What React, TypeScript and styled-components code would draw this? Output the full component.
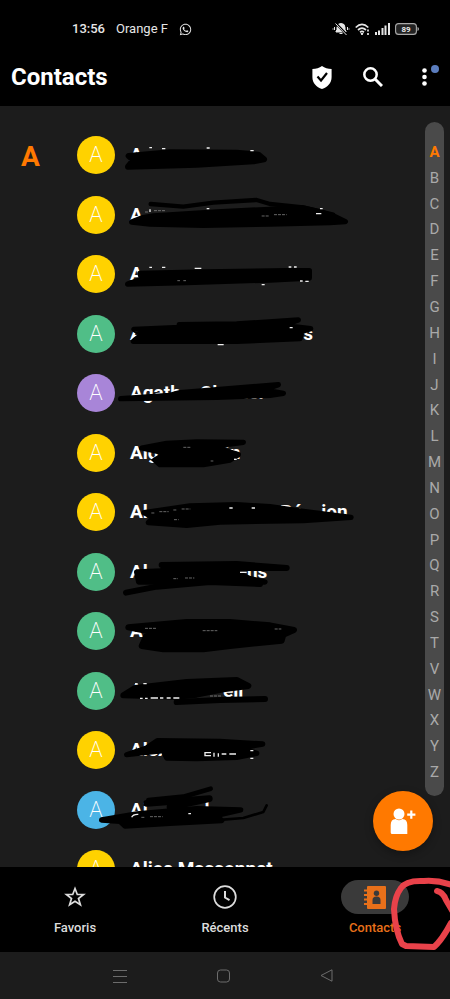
import React from "react";
import styled, { createGlobalStyle } from "styled-components";
import { FaWhatsapp } from "react-icons/fa";

const GlobalStyle = createGlobalStyle`
  * { box-sizing: border-box; }
  body { margin: 0; background: #000; font-family: Roboto, "Liberation Sans", sans-serif; }
  button { font: inherit; color: inherit; background: none; border: 0; padding: 0; cursor: pointer; }
  ul { list-style: none; margin: 0; padding: 0; }
  a { color: inherit; text-decoration: none; }
  svg { display: block; }
`;

const Screen = styled.div`
  position: relative;
  display: flex;
  flex-direction: column;
  height: 100vh;
  overflow: hidden;
  background: #000;
  color: #fff;
`;

const StatusBar = styled.div`
  display: flex;
  align-items: center;
  justify-content: space-between;
  flex: none;
  height: 48px;
  padding: 10px 31px 0 72px;
  color: #e6e6e6;
`;

const StatusGroup = styled.div<{ $gap: number }>`
  display: flex;
  align-items: center;
  gap: ${(p) => p.$gap}px;
`;

const Clock = styled.span`
  font-size: 13px;
  line-height: 16px;
  font-weight: 500;
`;

const Carrier = styled.span`
  font-size: 13px;
  line-height: 16px;
`;

const Header = styled.header`
  display: flex;
  align-items: center;
  justify-content: space-between;
  flex: none;
  height: 58px;
  padding: 0 12px 0 11px;
`;

const Title = styled.h1`
  margin: 0;
  font-size: 24px;
  line-height: 32px;
  font-weight: 700;
`;

const Actions = styled.div`
  display: flex;
  align-items: center;
  gap: 23px;
`;

const IconButton = styled.button`
  position: relative;
  display: flex;
  align-items: center;
  justify-content: center;
  width: 28px;
  height: 28px;
`;

const Dot = styled.span`
  position: absolute;
  top: 2px;
  right: -1px;
  width: 8px;
  height: 8px;
  border-radius: 50%;
  background: #5b7dbe;
`;

const Content = styled.main`
  position: relative;
  display: flex;
  flex: 1;
  min-height: 0;
  overflow: hidden;
  background: #1c1c1c;
`;

const Section = styled.h2`
  flex: none;
  width: 77px;
  margin: 0;
  padding: 34px 0 0 21px;
  font-size: 28px;
  line-height: 34px;
  font-weight: 700;
  color: #ff7900;
`;

const ContactList = styled.ul`
  flex: 1;
  min-width: 0;
  padding-top: 19px;
`;

const ContactRow = styled.li`
  height: 60px;
  &:nth-child(even) { height: 59px; }
`;

const ContactLink = styled.a`
  display: flex;
  align-items: center;
  gap: 15px;
  height: 100%;
`;

const Avatar = styled.span<{ $color: string }>`
  display: flex;
  align-items: center;
  justify-content: center;
  flex: none;
  width: 38px;
  height: 38px;
  border-radius: 50%;
  background: ${(p) => p.$color};
  font-size: 22px;
  line-height: 24px;
  font-weight: 200;
`;

const Name = styled.span`
  white-space: pre;
  font-size: 19px;
  line-height: 24px;
  font-weight: 700;
`;

const Scribbles = styled.svg`
  position: absolute;
  top: 0;
  left: 0;
  pointer-events: none;
`;

const IndexBar = styled.nav`
  display: flex;
  flex-direction: column;
  flex: none;
  width: 19px;
  margin: 16px 6px 71px 0;
  padding: 17px 0 11px;
  border-radius: 10px;
  background: #4a4a4a;
`;

const IndexLetter = styled.a<{ $active: boolean }>`
  display: flex;
  align-items: center;
  justify-content: center;
  flex: 1;
  font-size: 15px;
  line-height: 18px;
  font-weight: ${(p) => (p.$active ? 700 : 400)};
  && { color: ${(p) => (p.$active ? "#ff7900" : "#a9a9a9")}; }
`;

const AddButton = styled.button`
  && {
    position: absolute;
    right: 17px;
    bottom: 16px;
    display: flex;
    align-items: center;
    justify-content: center;
    width: 60px;
    height: 60px;
    border-radius: 50%;
    background: #ff7900;
    box-shadow: 0 3px 8px rgba(0, 0, 0, 0.3);
  }
`;

const TabBar = styled.nav`
  display: flex;
  flex: none;
  height: 85px;
  padding-top: 13px;
`;

const Tab = styled.button<{ $active?: boolean }>`
  && { color: ${(p) => (p.$active ? "#e8701a" : "#dcdcdc")}; }
  display: flex;
  flex: 1;
  flex-direction: column;
  align-items: center;
  gap: 5px;
  font-size: 13px;
  line-height: 18px;
  font-weight: 500;
`;

const Pill = styled.span<{ $active?: boolean }>`
  display: flex;
  align-items: center;
  justify-content: center;
  width: 68px;
  height: 34px;
  border-radius: 17px;
  background: ${(p) => (p.$active ? "#3a3a3a" : "transparent")};
`;

const SystemBar = styled.div`
  display: flex;
  align-items: center;
  justify-content: center;
  gap: 82px;
  flex: none;
  height: 47px;
  padding-right: 4px;
  background: #1c1c1c;
  color: #6c6c6c;
`;

const SystemButton = styled.button`
  display: flex;
  align-items: center;
  justify-content: center;
  width: 21px;
  height: 24px;
`;

const RedMark = styled.svg`
  position: absolute;
  right: 0;
  bottom: 44px;
  pointer-events: none;
`;

const yellow = "#ffd200";
const green = "#50be87";
const purple = "#a885d8";
const blue = "#4bb4e6";

const sp = (n: number) => " ".repeat(n);

const contacts = [
  { name: "A", color: yellow },
  { name: "A", color: yellow },
  { name: "A", color: yellow },
  { name: "A" + sp(34) + "s", color: green },
  { name: "Agath" + sp(4) + "Clauuci", color: purple },
  { name: "Aig" + sp(14) + "in", color: yellow },
  { name: "Al" + sp(28) + "Pé" + sp(4) + "ion", color: yellow },
  { name: "Al" + sp(21) + "ns", color: green },
  { name: "A", color: green },
  { name: "A" + sp(17) + "ell", color: green },
  { name: "Alex" + sp(7) + "eien", color: yellow },
  { name: "Ai" + sp(12) + "l", color: blue },
  { name: "Alice Massonnet", color: yellow },
];

type Ink = { y: number; shapes: [string, number][]; lines?: [string, number][]; flecks: string; faint?: string };

const inks: Ink[] = [
  {
    y: 120,
    shapes: [
      ["M176 108L300 97L500 98L565 104L582 118L550 124L380 134L174 140L190 120Z", 18],
      ["M185 306L215 294L250 288L440 276L600 268L700 264L760 278L795 290L826 305L780 308L600 312L400 316L240 312Z", 16],
    ],
    lines: [["M242 252L340 260L430 248L560 240L600 252L700 262L790 284", 13]],
    flecks: "M238 83h8M276 86h10M410 84h9M541 92h10M240 268v8M410 266h8M738 281h16M750 266h8",
    faint: "M225 276h12M252 272h34M575 288h22M612 284h38",
  },
  {
    y: 240,
    shapes: [
      ["M210 100L400 96L650 92L718 92L718 114L600 120L350 128L173 132L215 118Z", 16],
      ["M328 254L500 252L685 240L640 256L690 262L722 266L696 274L690 296L500 304L190 304L215 284L192 268L330 262Z", 16],
    ],
    flecks: "M238 82h8M276 82h10M374 85h20M656 81h8M672 81h8M575 134h9M690 123h8M706 124h10M443 314h18M659 263h9",
    faint: "M322 122h8M340 122h8",
  },
  {
    y: 360,
    shapes: [
      ["M330 98L625 74L580 90L640 100L600 106L440 112L152 116L300 106Z", 16],
      ["M215 264L290 250L380 246L520 247L450 256L460 270L505 284L480 300L400 314L270 314L254 300L290 280Z", 16],
    ],
    flecks: "M492 298h8",
    faint: "M340 262h22M422 303h8",
  },
  {
    y: 480,
    shapes: [
      ["M222 98L360 78L500 74L600 80L700 94L843 112L700 122L450 126L350 136L235 128L250 112Z", 16],
      ["M200 276L350 270L500 278L540 296L585 306L420 306L206 306Z", 16],
    ],
    lines: [["M275 255L500 252L650 264L480 264L280 268", 18], ["M168 338L260 320L420 306L570 312", 18]],
    flecks: "M478 84h10M545 84h10M510 277h20",
    faint: "M244 99h10M268 95h28M310 90h12M335 87h26M312 119h14M310 296h14M345 294h28",
  },
  {
    y: 600,
    shapes: [
      ["M175 82L350 66L480 66L600 76L672 90L640 104L635 122L480 138L400 148L280 148L215 138L235 94Z", 18],
      ["M160 286L195 264L350 246L500 240L535 258L460 268L380 284L320 290Z", 18],
    ],
    lines: [["M320 306L450 300L585 297", 18]],
    flecks: "M195 251h8M220 251h10M210 295h8M225 295h8M242 294h22M270 294h10M290 294h12M310 294h18",
    faint: "M225 85h36M398 92h44M614 87h20M420 288h35",
  },
  {
    y: 720,
    shapes: [
      ["M262 62L450 64L578 72L510 84L560 100L500 112L380 116L290 114L280 92L170 104L230 84Z", 16],
      ["M95 300L200 282L380 266L512 270L440 286L455 302L300 310L165 318L150 304Z", 16],
    ],
    lines: [
      ["M235 240L340 230L422 206", 14],
      ["M230 250L418 236L300 262", 20],
      ["M460 299L520 294L580 276L590 256", 8],
    ],
    flecks: "M403 98h20M403 107h20M405 98v9M432 98v12M445 100v10M455 102h14M478 102h20M541 92h9M541 115h9M185 292q4-10 20-9M355 281h8",
    faint: "M214 292h12M240 290h38",
  },
];

const IndexLetters = "ABCDEFGHIJKLMNOPQRSTVWXYZ".split("");

const StatusIcons = () => (
  <StatusGroup $gap={5}>
    <svg width="18" height="14" viewBox="0 0 18 14" fill="none" stroke="currentColor">
      <path d="M4 10V9l1-1V5.500a4 4 0 0 1 8 0V8l1 1v1z M7.500 11.500h3" fill="currentColor" />
      <path d="M.5 7h1M2.500 5v3M15.500 5v3M16.500 7h1" strokeWidth="1" />
      <path d="M4 1.500L15 13" stroke="#000" strokeWidth="2.500" />
      <path d="M3.500 1.500L14.500 13" strokeWidth="1" />
    </svg>
    <svg width="15" height="13" viewBox="0 0 15 13" fill="none" stroke="currentColor" strokeWidth="1.700">
      <path d="M.7 4.500Q7 -1.600 13.300 4.500M3 7q4-3.600 8 0M5 9.200q2-1.500 4 0" />
      <path d="M6 10.500h2L7 12z" fill="currentColor" strokeWidth="1" />
      <path d="M13 6.500v2M13 10v2" />
    </svg>
    <svg width="15" height="12" viewBox="0 0 15 12" fill="currentColor">
      <path d="M0 9h2v3H0zM3 7.500h2V12H3zM6.500 5h2v7h-2zM9.500 2.500h2V12h-2zM13 0h2v12h-2z" />
    </svg>
    <svg width="24" height="12" viewBox="0 0 24 12">
      <rect x=".6" y=".6" width="20.800" height="10.800" rx="3" fill="#222" stroke="#aaa" strokeWidth="1.100" />
      <path d="M22.500 4v4q1.500-.4 1.500-2t-1.500-2z" fill="#aaa" />
      <text x="11" y="9" fontSize="8" fontWeight="700" textAnchor="middle" fill="#e6e6e6">89</text>
    </svg>
  </StatusGroup>
);

export default function App() {
  return (
    <Screen>
      <GlobalStyle />
      <StatusBar>
        <StatusGroup $gap={11}>
          <Clock>13:56</Clock>
          <Carrier>Orange F</Carrier>
          <FaWhatsapp size={13} />
        </StatusGroup>
        <StatusIcons />
      </StatusBar>

      <Header>
        <Title>Contacts</Title>
        <Actions>
          <IconButton aria-label="Protection">
            <svg width="20" height="23" viewBox="0 0 20 23">
              <path d="M10 0Q6 3 .4 3V11c0 6 4 10 9.600 12 5.600-2 9.600-6 9.600-12V3Q14 3 10 0z" fill="#fff" />
              <path d="M5.500 10.500l3.500 4L15 7" fill="none" stroke="#000" strokeWidth="2.200" />
            </svg>
          </IconButton>
          <IconButton aria-label="Rechercher">
            <svg width="20" height="20" viewBox="0 0 20 20" fill="none" stroke="#fff">
              <circle cx="7.500" cy="7.500" r="6.200" strokeWidth="2.500" />
              <path d="M12 12l7 7" strokeWidth="3" />
            </svg>
          </IconButton>
          <IconButton aria-label="Plus d’options">
            <svg width="5" height="18" viewBox="0 0 5 18" fill="#fff">
              <circle cx="2.500" cy="2.500" r="2.300" />
              <circle cx="2.500" cy="9" r="2.300" />
              <circle cx="2.500" cy="15.500" r="2.300" />
            </svg>
            <Dot />
          </IconButton>
        </Actions>
      </Header>

      <Content>
        <Section>A</Section>
        <ContactList>
          {contacts.map((c, i) => (
            <ContactRow key={i}>
              <ContactLink href="#contact">
                <Avatar $color={c.color}>A</Avatar>
                <Name>{c.name}</Name>
              </ContactLink>
            </ContactRow>
          ))}
        </ContactList>
        <Scribbles width="370" height="761" viewBox="0 106 370 761" aria-hidden="true">
          {inks.map((ink) => (
            <g
              key={ink.y}
              transform={`translate(70 ${ink.y}) scale(0.33333)`}
              stroke="#000"
              strokeLinecap="round"
              strokeLinejoin="round"
            >
              {ink.shapes.map(([d, w]) => <path key={d} d={d} strokeWidth={w} />)}
              {ink.lines?.map(([d, w]) => <path key={d} d={d} strokeWidth={w} fill="none" />)}
              <path d={ink.flecks} stroke="#eee" strokeWidth="4" strokeLinecap="butt" fill="none" />
              <path d={ink.faint} stroke="#999" strokeWidth="2" strokeLinecap="butt" strokeDasharray="9 3" fill="none" />
            </g>
          ))}
        </Scribbles>
        <IndexBar aria-label="Index">
          {IndexLetters.map((l) => (
            <IndexLetter key={l} href={`#${l}`} $active={l === "A"}>{l}</IndexLetter>
          ))}
        </IndexBar>
        <AddButton aria-label="Ajouter un contact">
          <svg width="26" height="27" viewBox="0 0 26 27" fill="#fff">
            <circle cx="9" cy="6" r="5.500" />
            <path d="M.7 24.500V17q0-6 5-6 3.300 2.400 6.600 0 5 0 5 6v9H2.200Q.7 26 .7 24.500z" />
            <path d="M20.200 2.500h2.200v3h3v2.200h-3v3h-2.200v-3h-3V5.500h3z" />
          </svg>
        </AddButton>
      </Content>

      <TabBar>
        <Tab>
          <Pill>
            <svg width="22" height="22" viewBox="0 0 22 22" fill="none" stroke="currentColor" strokeWidth="1.700">
              <path d="M11 2.500l2.300 6h6.200l-5 4 1.900 6.300L11 15.200l-5.400 3.600 1.900-6.300-5-4h6.200z" />
            </svg>
          </Pill>
          Favoris
        </Tab>
        <Tab>
          <Pill>
            <svg width="24" height="24" viewBox="0 0 24 24" fill="none" stroke="currentColor" strokeWidth="1.700">
              <circle cx="12" cy="12" r="10.800" />
              <path d="M12 6v6.500l4.500 2.700" strokeWidth="2" />
            </svg>
          </Pill>
          Récents
        </Tab>
        <Tab $active>
          <Pill $active>
            <svg width="22" height="23" viewBox="0 0 22 23">
              <rect x="3" y="0" width="19" height="23" rx="1" fill="currentColor" />
              <path d="M.5 4.500h5M.5 9h5M.5 13.500h5M.5 18h5" stroke="currentColor" strokeWidth="2" strokeLinecap="round" />
              <circle cx="12.500" cy="7.300" r="2.700" fill="#3a3a3a" />
              <path d="M8.500 18v-4q0-3.500 4-3.500t4 3.500v4z" fill="#3a3a3a" />
            </svg>
          </Pill>
          Contacts
        </Tab>
      </TabBar>

      <SystemBar>
        <SystemButton aria-label="Applications récentes">
          <svg width="14" height="14" viewBox="0 0 14 14" stroke="currentColor">
            <path d="M0 1.500h14M0 7.500h14M0 13.500h14" />
          </svg>
        </SystemButton>
        <SystemButton aria-label="Accueil">
          <svg width="13" height="14" viewBox="0 0 13 14" fill="none" stroke="currentColor">
            <rect x=".5" y="1" width="12" height="12" rx="3" />
          </svg>
        </SystemButton>
        <SystemButton aria-label="Retour">
          <svg width="13" height="13" viewBox="0 0 13 13" fill="none" stroke="currentColor">
            <path d="M12 .8v11.400L1 6.500z" strokeLinejoin="round" />
          </svg>
        </SystemButton>
      </SystemBar>

      <RedMark width="60" height="80" viewBox="390 875 60 80" fill="none" stroke="#e9424a" strokeWidth="6" strokeLinecap="round" strokeLinejoin="round" aria-hidden="true">
        <path d="M452 885Q438 880 424 881Q406 880 401 888Q395 896 394 909Q395 930 402 944L406 946L434 947Q442 940 451 923" />
        <path d="M437 891Q443 892 446 900L453 912" />
      </RedMark>
    </Screen>
  );
}
